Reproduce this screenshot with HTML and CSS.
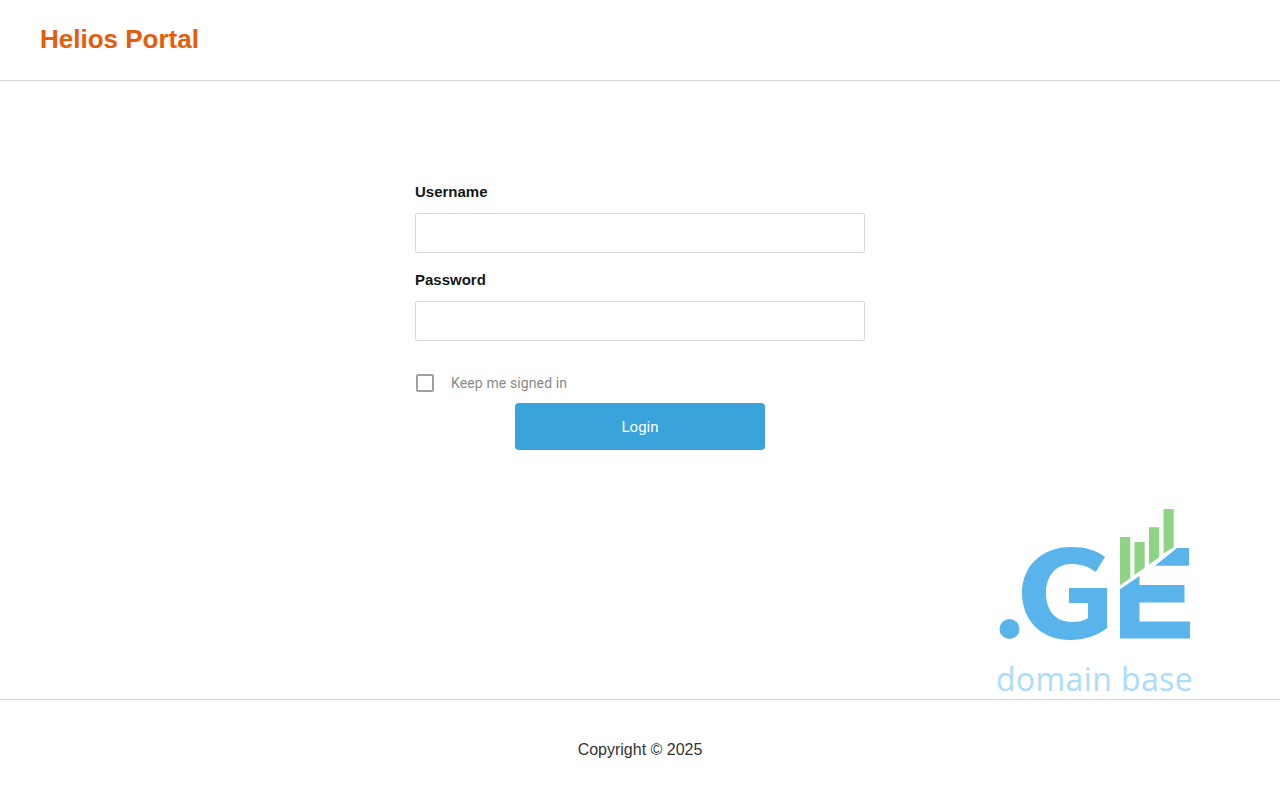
FILE: index.html
```html
<!DOCTYPE html>
<html lang="en">
<head>
  <meta charset="UTF-8" />
  <meta name="viewport" content="width=device-width, initial-scale=1.0"/>
  <title>Helios Portal</title>
  <link rel="stylesheet" href="styles.css">
</head>
<body>

  <header class="site-header">
    <h1>Helios Portal</h1>
  </header>

  <main class="site-main">
    <form class="login-form">
      <label class="field-label" for="username">Username</label>
      <input class="field-input" type="text" id="username" name="username" />

      <label class="field-label" for="password">Password</label>
      <input class="field-input" type="password" id="password" name="password" />

      <label class="keep-signed">
        <input type="checkbox" name="keep" />
        <span>Keep me signed in</span>
      </label>

      <button class="login-btn" type="submit">Login</button>
    </form>
  </main>

  <footer class="site-footer">Copyright © 2025</footer>

  <!-- logo sits over the footer rule -->
  <div class="logo">
    <svg viewBox="990 505 210 165" width="210" height="165" aria-hidden="true">
      <circle cx="1009.5" cy="629" r="10" fill="#5ab4ec"/>
      <path fill="#5ab4ec" d="M1105 557 L1095.7 572 C1088 566 1080 564 1071 564 C1056 564 1046 576 1046 593 C1046 611 1056 622 1072 622 C1078 622 1083 621 1088 618 L1088 603 L1069 603 L1069 588 L1107 588 L1107 628 C1097 636 1084 640 1070 640 C1041 640 1022 620 1022 593 C1022 566 1042 547 1071 547 C1085 547 1096 550 1105 557 Z"/>
      <path fill="#5ab4ec" d="M1120 589.3 L1139.5 576 L1139.5 585 L1184.5 585 L1184.5 602.5 L1139.5 602.5 L1139.5 621.5 L1190 621.5 L1190 638.5 L1120 638.5 Z"/>
      <path fill="#5ab4ec" d="M1177 548 L1189 548 L1189 565.7 L1155 565.7 Z"/>
      <g fill="#8fd385">
        <path d="M1120 537 L1130.3 537 L1130.3 578 L1120 585.5 Z"/>
        <path d="M1134.5 542 L1144.7 542 L1144.7 567.7 L1134.5 575 Z"/>
        <path d="M1149 527.3 L1159.2 527.3 L1159.2 557.3 L1149 564.5 Z"/>
        <path d="M1163.5 509 L1173.7 509 L1173.7 547.5 L1163.5 553.5 Z"/>
      </g>
    </svg>
    <div class="logo-text">domain base</div>
  </div>

</body>
</html>
```

FILE: styles.css
```css
* {
  box-sizing: border-box;
}
html, body {
  height: 100%;
}
body {
  margin: 0;
  display: flex;
  flex-direction: column;
  min-height: 800px;
  background: #fff;
  font-family: 'Liberation Sans', Arial, sans-serif;
  color: #212529;
  position: relative;
  overflow: hidden;
}
.site-header {
  height: 81px;
  padding: 0 40px 2px;
  display: flex;
  align-items: center;
  border-bottom: 1px solid #d6d6d6;
}
.site-header h1 {
  margin: 0;
  font-size: 26px;
  font-weight: 700;
  color: #e65c0c;
}
.site-main {
  flex: 1;
  padding-top: 101px;
}
.login-form {
  width: 450px;
  margin: 0 auto;
}
.field-label {
  display: block;
  font-size: 15px;
  font-weight: 700;
  line-height: 20px;
  margin-bottom: 11px;
  color: #14171a;
}
.field-input {
  display: block;
  width: 100%;
  height: 40px;
  margin-bottom: 17px;
  padding: 0 10px;
  border: 1px solid #d9d9d9;
  border-radius: 2px;
  background: #fff;
  font-size: 15px;
}
.keep-signed {
  display: flex;
  align-items: center;
  gap: 17px;
  margin-top: 32px;
  height: 20px;
  padding-left: 1px;
  font-family: Roboto, sans-serif;
  font-size: 14px;
  letter-spacing: 0.12px;
  color: #8a8a8a;
}
.keep-signed input {
  appearance: none;
  width: 18px;
  height: 18px;
  margin: 0;
  border: 2px solid #a0a0a0;
  border-radius: 2px;
  background: #fff;
}
.login-btn {
  display: block;
  width: 250px;
  height: 47px;
  margin: 10px auto 0;
  border: none;
  border-radius: 4px;
  background: #3aa3dc;
  color: #fff;
  font-family: Roboto, sans-serif;
  font-size: 15px;
  cursor: pointer;
}
.site-footer {
  height: 101px;
  border-top: 1px solid #d6d6d6;
  display: flex;
  align-items: center;
  justify-content: center;
  font-size: 16px;
  color: #333;
}
.logo {
  position: absolute;
  left: 990px;
  top: 505px;
  width: 210px;
}
.logo svg {
  display: block;
}
.logo-text {
  margin-top: -14px;
  padding-right: 1px;
  text-align: center;
  font-family: 'Open Sans', sans-serif;
  font-size: 32px;
  line-height: 46px;
  font-weight: 400;
  letter-spacing: 0.4px;
  color: #aadcfb;
  white-space: nowrap;
}
```
